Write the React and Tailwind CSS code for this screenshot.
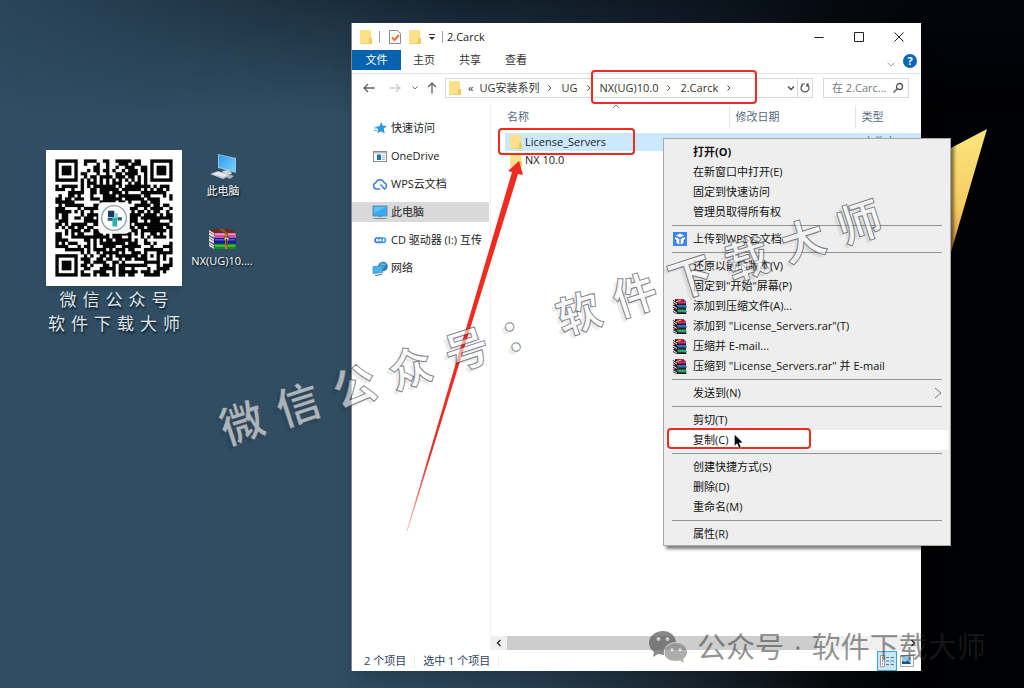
import React from "react";

const FolderIcon = ({ className = "w-3.5 h-4" }) => (
  <svg viewBox="0 0 14 16" className={className} aria-hidden="true">
    <path d="M1 1h10l1 1v7h1v6H1z" fill="#fbdc7f" />
    <path d="M1 1h10v13H1z" fill="#fde08a" />
    <path d="M10 9h3v6H2l8-1z" fill="#f1c95c" />
  </svg>
);

const BooksIcon = ({ className = "w-4 h-4" }) => (
  <svg viewBox="0 0 16 16" className={className} aria-hidden="true">
    <path d="M3 1h8l3 3v11l1 1H5l-3-3z" fill="#2a1a1c" />
    <path d="M3 1h8l3 2.500H6z" fill="#b3184f" />
    <path d="M6 3.500h8v2H6z" fill="#dc2a74" />
    <path d="M5 7h9l1 2.500H6z" fill="#2f74c8" />
    <path d="M5 11.500h9l1 2.700H6z" fill="#25ab70" />
    <path d="M1 2.500l4 3M1 4.500l4 2.500M1 7l4 2.500M1 9l4 2.500M1 11.500l4 2.500M1 13.500l4 2" stroke="#3a2a30" strokeWidth="1.200" />
    <path d="M1 3.500l4 2.500M1 8l4 2.500M1 12.500l4 2.500" stroke="#f4f0f0" strokeWidth=".9" />
    <path d="M4 4l5-2" stroke="#f0c040" strokeWidth="1.200" />
  </svg>
);

const ArchiveIcon = () => (
  <svg viewBox="0 0 28 22" className="w-7 h-[22px]" aria-hidden="true">
    <path d="M1 2l4-1h19l4 5H6z" fill="#6d2b1f" />
    <path d="M6 5h22v5H6z" fill="#c9549f" />
    <path d="M7 5.500h20v1.500H7z" fill="#ee9dd0" />
    <path d="M6 10h22v5.500H6z" fill="#181d8f" />
    <path d="M7 11h20v1.500H7z" fill="#4b62e8" />
    <path d="M6 16h22v5H6z" fill="#128c1c" />
    <path d="M7 17h20v1.500H7z" fill="#45d044" />
    <path d="M1 2l5 3v4.500L1 7zM1 8l5 3v4.500L1 13zM1 14l5 3v4l-5-3z" fill="#e4dede" />
    <path d="M1 4l5 3M1 10l5 3M1 16l5 3" stroke="#776a70" strokeWidth=".8" />
    <path d="M11 1h4l5 4v16h-3V6z" fill="#8c5424" />
    <path d="M18 6v15" stroke="#e3a84a" />
    <rect x="16" y="9" width="5" height="4" rx="1" fill="#d8c7a0" stroke="#54402a" />
    <path d="M18.500 11v6" stroke="#4a3a30" strokeWidth="1.500" />
  </svg>
);

const DesktopPcIcon = () => (
  <svg viewBox="0 0 28 26" className="w-7 h-[26px]" aria-hidden="true">
    <defs>
      <linearGradient id="pc" x1="0" y1="0" x2="1" y2="1">
        <stop offset="0" stopColor="#2a9cf0" />
        <stop offset="1" stopColor="#7ccdfb" />
      </linearGradient>
    </defs>
    <path d="M9 0l18 4v15L9 14z" fill="#8fc4e2" />
    <path d="M10 1l16 4v12l-16-4z" fill="url(#pc)" />
    <path d="M13 17l6-1 3 2 1 2-7 1z" fill="#cfd6da" />
    <path d="M1 20l8-3 13 4-8 4z" fill="#c3cace" />
    <path d="M4 20l5-2 10 3-5 2z" fill="#e6eaec" />
    <path d="M17 23l5-2 3 1-4 3z" fill="#a9b4bb" />
  </svg>
);

const navIcons = {
  star: (
    <svg viewBox="0 0 16 16" className="w-4 h-4">
      <path d="M9.500 2l1.200 3.800L15 6l-3.300 2.800 1 4.700-3.800-2.300-3.700 2 1-4L3 6.800l4.500-.6z" fill="#2795e0" />
      <path d="M2 8h4M2 10.500h3" stroke="#58b4ee" />
    </svg>
  ),
  drive: (
    <svg viewBox="0 0 16 16" className="w-4 h-4">
      <rect x="1.500" y="3.500" width="13" height="10" fill="#fff" stroke="#878d92" />
      <path d="M2 4h12v1.500H2z" fill="#b8bec4" />
      <path d="M5 6.500h4V12H5z" fill="#1177c4" />
      <path d="M10 7.500h3M10 9.500h3M10 11.500h3" stroke="#9aa" strokeWidth=".8" />
    </svg>
  ),
  cloud: (
    <svg viewBox="0 0 16 16" className="w-4 h-4" fill="none" stroke="#447fdc" strokeWidth="1.500">
      <path d="M8 13H4.500a3.200 3.200 0 0 1-.7-6.200A4.300 4.300 0 0 1 12 6.500 3.500 3.500 0 0 1 12.500 13L8.500 8.500" />
    </svg>
  ),
  pc: (
    <svg viewBox="0 0 16 16" className="w-4 h-4">
      <rect x="1" y="2" width="14" height="10" fill="#3ba9f0" stroke="#4d87ac" strokeWidth=".8" />
      <path d="M2 3h12L2 9z" fill="#62c0f6" />
      <path d="M6 12.500h4M1.500 14.500h13" stroke="#7390a3" />
    </svg>
  ),
  disc: (
    <svg viewBox="0 0 16 16" className="w-4 h-4" fill="none" strokeWidth="1.600">
      <rect x="3" y="6" width="7" height="4.500" rx="2.200" stroke="#5560e0" />
      <rect x="6.500" y="6" width="7" height="4.500" rx="2.200" stroke="#2fa0f2" />
      <path d="M6 8.200h4" stroke="#fff" strokeWidth="1" />
    </svg>
  ),
  network: (
    <svg viewBox="0 0 16 16" className="w-4 h-4">
      <circle cx="11" cy="6.500" r="4.800" fill="#2d82b4" />
      <path d="M9 3c3 0 4 3 2 5M8 5l6-1" stroke="#7dbfdf" fill="none" />
      <path d="M1 6.500l9.500-.8v7L1 13.500z" fill="#40b4f4" stroke="#5d8ba8" strokeWidth=".7" />
      <path d="M3 15.500l7-1" stroke="#4e7d9c" strokeWidth="1.200" />
    </svg>
  ),
};

const navItems = [
  ["star", "快速访问"],
  ["drive", "OneDrive"],
  ["cloud", "WPS云文档"],
  ["pc", "此电脑"],
  ["disc", "CD 驱动器 (I:) 互传"],
  ["network", "网络"],
];

const WpsIcon = () => (
  <svg viewBox="0 0 16 16" className="w-4 h-4" aria-hidden="true">
    <rect x="1" y="1" width="14" height="14" fill="#3f83ef" />
    <path d="M8 2.500l4 2-4 2-4-2zM3 6l4.300 2v5.500L4.500 12V9L3 8zM13 6L8.700 8v5.500L11.500 12V9L13 8z" fill="#fff" />
  </svg>
);

const menuGroups = [
  [["打开(O)"], ["在新窗口中打开(E)"], ["固定到快速访问"], ["管理员取得所有权"]],
  [["上传到WPS云文档", "wps"]],
  [
    ["还原以前的版本(V)"],
    ['固定到"开始"屏幕(P)'],
    ["添加到压缩文件(A)...", "books"],
    ['添加到 "License_Servers.rar"(T)', "books"],
    ["压缩并 E-mail...", "books"],
    ['压缩到 "License_Servers.rar" 并 E-mail', "books"],
  ],
  [["发送到(N)", "", "sub"]],
  [["剪切(T)"], ["复制(C)", "", "hover"]],
  [["创建快捷方式(S)"], ["删除(D)"], ["重命名(M)"]],
  [["属性(R)"]],
];

const N = 37;
const inFinder = (x, y) => {
  const spots = [[0, 0], [N - 7, 0], [0, N - 7]];
  for (const [a, b] of spots) {
    const dx = x - a;
    const dy = y - b;
    if (dx >= -1 && dx <= 7 && dy >= -1 && dy <= 7) {
      const r = Math.max(Math.abs(dx - 3), Math.abs(dy - 3));
      return r === 3 || r <= 1 ? 1 : 0;
    }
  }
  const r = Math.max(Math.abs(x - 30), Math.abs(y - 30));
  if (r <= 2) return r === 1 ? 0 : 1;
  return -1;
};
const buildCode = () => {
  let d = "";
  let seed = 90217;
  for (let y = 0; y < N; y++) {
    for (let x = 0; x < N; x++) {
      seed = (seed * 1103515245 + 12345) % 2147483648;
      const f = inFinder(x, y);
      const dark = Math.hypot(x - 18, y - 18) < 14 ? 0.66 : 0.54;
      const on = f >= 0 ? f === 1 : x === 6 || y === 6 ? (x + y) % 2 === 0 : (seed >> 8) % 1000 < dark * 1000;
      if (on) d += `M${x} ${y}h1v1h-1z`;
    }
  }
  return d;
};
const codePath = buildCode();

const QrCode = () => (
  <svg viewBox="-3 -3 43 43" className="w-[136px] h-[136px] bg-white shadow-md" role="img" aria-label="二维码">
    <path d={codePath} fill="#080808" stroke="#080808" strokeWidth=".06" />
    <rect x="13.500" y="13.500" width="10" height="10" rx="1.500" fill="#f8f8f8" />
    <circle cx="18.500" cy="18.500" r="3.900" fill="#fff" stroke="#8da0a8" strokeWidth=".4" />
    <path d="M16.600 16.200h2v2h-2z" fill="#193a68" />
    <path d="M18.600 17h1.200v1.200h-1.200z" fill="#8bd6d2" />
    <path d="M16.500 18.400h1.800v1h-1.800zM19.600 18.300h1.400v1h-1.400z" fill="#27597c" />
    <path d="M18 18.300h1.500v2.900H18z" fill="#28b3ad" />
  </svg>
);

const Crumb = ({ children }) => (
  <>
    <a href="#" className="whitespace-nowrap">{children}</a>
    <svg viewBox="0 0 4 6" className="w-1 h-1.5 shrink-0" fill="none" stroke="#555">
      <path d="M.5 .5L3 3 .5 5.500" />
    </svg>
  </>
);

function Explorer() {
  return (
    <section className="absolute left-[351px] right-[103px] top-[23px] bottom-[17px] flex flex-col bg-white border-l border-[#7b8791] shadow-xl overflow-hidden">
      <header className="flex items-center h-[27px] shrink-0 pl-[7px] pr-4">
        <FolderIcon />
        <span className="w-px h-3 bg-gray-400 ml-1.5 mr-2" />
        <svg viewBox="0 0 14 16" className="w-3.5 h-4" fill="none">
          <path d="M1.500 1.500h8l3 3v10h-11z" fill="#f8f8f8" stroke="#8b8b8b" />
          <path d="M4 8.500L6.500 11 11 6" stroke="#e2723f" strokeWidth="2" />
        </svg>
        <FolderIcon className="w-3.5 h-4 ml-1.5" />
        <svg viewBox="0 0 8 8" className="w-2 h-2 ml-1.5 mr-1.5">
          <path d="M1 1.500h6" stroke="#333" />
          <path d="M1 4h6L4 7z" fill="#333" />
        </svg>
        <span className="w-px h-3 bg-gray-400 mr-1" />
        <h1 className="text-[11px] text-[#222] flex-1">2.Carck</h1>
        <div className="flex items-center gap-7">
          <button aria-label="最小化" className="w-3 h-3">
            <svg viewBox="0 0 12 12" stroke="#222"><path d="M1.500 6.500h9" /></svg>
          </button>
          <button aria-label="最大化" className="w-3 h-3">
            <svg viewBox="0 0 12 12" stroke="#222" fill="none"><path d="M1.500 1.500h9v9h-9z" /></svg>
          </button>
          <button aria-label="关闭" className="w-3 h-3">
            <svg viewBox="0 0 12 12" stroke="#222"><path d="M1.500 1.500l9 9M10.500 1.500l-9 9" /></svg>
          </button>
        </div>
      </header>

      <nav className="flex items-start h-6 shrink-0 border-b border-[#e3e3e3] text-[#333]">
        <button className="w-[49px] h-5 bg-[#0563b1] text-white">文件</button>
        <button className="w-[46px] h-5">主页</button>
        <button className="w-[46px] h-5">共享</button>
        <button className="w-[46px] h-5">查看</button>
        <div className="flex-1" />
        <button aria-label="折叠功能区" className="h-5 w-3 mr-1.5 flex items-end">
          <svg viewBox="0 0 12 12" fill="none" stroke="#aaa"><path d="M2.500 4.500L6 8l3.500-3.500" /></svg>
        </button>
        <button aria-label="帮助" className="mt-1 mr-1 w-3.5 h-3.5 rounded-full bg-[#0a66b8] text-white text-[11px] leading-[14px] font-bold">?</button>
      </nav>

      <div className="flex items-center h-7 shrink-0 pl-2.5 pr-3 gap-2.5">
        <div className="flex items-center gap-2 shrink-0 w-[77px]">
          <button aria-label="后退"><svg viewBox="0 0 14 12" className="w-3.5 h-3" fill="none" stroke="#666" strokeWidth="1.400"><path d="M12.500 6H2M6 2L2 6l4 4" /></svg></button>
          <button aria-label="前进" className="ml-1"><svg viewBox="0 0 14 12" className="w-3.5 h-3" fill="none" stroke="#cfcfcf" strokeWidth="1.400"><path d="M1.500 6H12M8 2l4 4-4 4" /></svg></button>
          <button aria-label="最近位置" className="ml-0.5"><svg viewBox="0 0 6 6" className="w-1.5 h-1.5" fill="none" stroke="#777"><path d="M.5 1.500L3 4l2.500-2.500" /></svg></button>
          <button aria-label="上移"><svg viewBox="0 0 12 14" className="w-3 h-3.5" fill="none" stroke="#666" strokeWidth="1.400"><path d="M6 12.500V2M2 6l4-4 4 4" /></svg></button>
        </div>
        <div className="flex flex-1 min-w-0 items-center h-5 border border-[#d9d9d9] -ml-1 pl-0.5 text-[#333]">
          <FolderIcon />
          <span className="mx-1.5">«</span>
          <div className="flex items-center gap-[9px] flex-1 min-w-0 overflow-hidden">
            <Crumb>UG安装系列</Crumb>
            <Crumb>UG</Crumb>
            <Crumb>NX(UG)10.0</Crumb>
            <Crumb>2.Carck</Crumb>
          </div>
          <button aria-label="展开地址" className="px-0.5"><svg viewBox="0 0 8 8" className="w-2 h-2" fill="none" stroke="#444" strokeWidth="1.300"><path d="M1 2.500l3 3 3-3" /></svg></button>
          <span className="w-px h-full bg-[#d9d9d9]" />
          <button aria-label="刷新" className="px-px"><svg viewBox="0 0 12 12" className="w-3 h-3" fill="none" stroke="#555" strokeWidth="1.200"><path d="M8 2.500a4 4 0 1 1-4.500.3M3 5V2h3M8 5V2h2" /></svg></button>
        </div>
        <label className="flex items-center w-[86px] h-5 shrink-0 border border-[#d9d9d9] pl-2 pr-1">
          <input aria-label="搜索" placeholder="在 2.Carc..." className="w-full min-w-0 bg-transparent outline-none placeholder:text-[#777]" />
          <svg viewBox="0 0 12 12" className="w-3 h-3 shrink-0" fill="none" stroke="#555" strokeWidth="1.300"><circle cx="7.500" cy="4.500" r="3" /><path d="M5.300 6.700L1.500 10.500" /></svg>
        </label>
      </div>

      <div className="flex flex-1 min-h-0">
        <aside className="w-[139px] shrink-0 border-r border-[#f2f2f2] pt-4 pr-px">
          <ul className="flex flex-col gap-2">
            {navItems.map(([icon, label]) => (
              <li key={label}>
                <a href="#" className={label === "此电脑" ? "flex items-center h-5 pl-5 gap-[3px] whitespace-nowrap bg-[#d9d9d9]" : "flex items-center h-5 pl-5 gap-[3px] whitespace-nowrap"}>
                  {navIcons[icon]}
                  {label}
                </a>
              </li>
            ))}
          </ul>
        </aside>
        <main className="flex flex-col flex-1 min-w-0 pt-[3px]">
          <div className="flex-1 min-h-0 overflow-hidden pl-3.5">
            <table className="w-full table-fixed border-collapse text-left">
              <thead>
                <tr className="h-[23px] text-[#55697f]">
                  <th className="w-[224px] font-normal pl-0.5 border-r border-[#e5e5e5]">
                    <div className="relative">
                      名称
                      <svg viewBox="0 0 8 5" className="absolute w-2 h-[5px] left-[105px] -top-1.5" fill="none" stroke="#888"><path d="M1 4l3-3 3 3" /></svg>
                    </div>
                  </th>
                  <th className="w-[126px] font-normal pl-1.5 border-r border-[#e5e5e5]">修改日期</th>
                  <th className="font-normal pl-1.5">类型</th>
                </tr>
              </thead>
              <tbody>
                <tr className="h-[5px]"><td colSpan="3" /></tr>
                <tr className="h-[18px] bg-[#cce8ff]">
                  <td><div className="flex items-center pl-1 gap-0.5 h-[18px]"><FolderIcon />License_Servers</div></td>
                  <td />
                  <td className="pl-2 text-gray-500">文件夹</td>
                </tr>
                <tr className="h-[18px]">
                  <td><div className="flex items-center pl-1 gap-0.5 h-[18px]"><FolderIcon />NX 10.0</div></td>
                  <td />
                  <td className="pl-2 text-gray-500">文件夹</td>
                </tr>
              </tbody>
            </table>
          </div>
          <div className="flex items-center h-3.5 shrink-0 bg-[#f0f0f0]">
            <button aria-label="向左滚动" className="w-4 flex justify-center"><svg viewBox="0 0 6 8" className="w-1.5 h-2" fill="none" stroke="#333" strokeWidth="1.500"><path d="M4.500 1l-3 3 3 3" /></svg></button>
            <div className="h-full w-[72%] bg-[#cdcdcd]" />
            <div className="flex-1" />
            <button aria-label="向右滚动" className="w-4 flex justify-center"><svg viewBox="0 0 6 8" className="w-1.5 h-2" fill="none" stroke="#333" strokeWidth="1.500"><path d="M1.500 1l3 3-3 3" /></svg></button>
          </div>
        </main>
      </div>

      <footer className="flex items-center h-[21px] shrink-0 pl-3 pr-1 text-[#2c4461]">
        <span>2 个项目</span>
        <span className="w-px h-3 bg-[#eee] mx-2" />
        <span>选中 1 个项目</span>
        <span className="w-px h-3 bg-[#eee] mx-2" />
        <div className="flex-1" />
        <button aria-label="详细信息" className="w-5 h-5 border border-[#35a9cf] bg-[#c6e8f5] flex items-center justify-center">
          <svg viewBox="0 0 14 12" className="w-3.5 h-3" fill="none"><path d="M.5 .5h4v11h-4z" fill="#fff" stroke="#999" /><path d="M2.500 2v2M2.500 5v2M2.500 8v2" stroke="#b08c8c" /><path d="M6 2.500h3M10.500 2.500H14M6 6h3M10.500 6H14M6 9.500h3M10.500 9.500H14" stroke="#56799a" /></svg>
        </button>
        <button aria-label="大图标" className="w-5 h-5 flex items-center justify-center">
          <svg viewBox="0 0 14 12" className="w-3.5 h-3"><path d="M.5 .5h13v11H.5z" fill="#f6f6f6" stroke="#a0a6ac" /><path d="M2 2h9v7H2z" fill="#8cc4ee" /><path d="M2 9V6l3 1 3-1.500L11 9z" fill="#1d4f83" /></svg>
        </button>
      </footer>
    </section>
  );
}

function ContextMenu() {
  return (
    <ul role="menu" className="absolute left-[663px] top-[138px] w-[288px] bg-[#eeeeee] border border-[#a8a8a8] pt-[3px] pb-px px-0.5 shadow-[3px_3px_3px_rgba(0,0,0,0.5)] text-[#111]">
      {menuGroups.map((group, g) => (
        <React.Fragment key={g}>
          {g > 0 && (
            <li role="separator" className="flex items-center h-[7px] px-1.5">
              <span className="h-px w-full bg-[#929292]" />
            </li>
          )}
          {group.map(([label, icon, state]) => (
            <li key={label} role="none">
              <button role="menuitem" className={state === "hover" ? "flex items-center w-full h-5 pl-1.5 pr-1.5 gap-[5px] bg-white" : "flex items-center w-full h-5 pl-1.5 pr-1.5 gap-[5px]"}>
                <span className="w-4 h-4 shrink-0">
                  {icon === "wps" && <WpsIcon />}
                  {icon === "books" && <BooksIcon />}
                </span>
                <span className={label === "打开(O)" ? "flex-1 text-left font-bold" : "flex-1 text-left whitespace-nowrap"}>{label}</span>
                {state === "sub" && (
                  <svg viewBox="0 0 8 14" className="w-2 h-3.5" fill="none" stroke="#777"><path d="M1 2l6 5-6 5" /></svg>
                )}
              </button>
            </li>
          ))}
        </React.Fragment>
      ))}
    </ul>
  );
}

export default function App() {
  return (
    <div className="relative h-screen w-full overflow-hidden text-[11px] leading-[14px] text-[#222] font-['Open_Sans','Noto_Sans_CJK_SC',sans-serif] bg-[#000103]">
      <div className="absolute inset-0 bg-[linear-gradient(90deg,#304d63_0%,#304d62_34%,#283f52_52%,#1a2630_68%,#07090c_82%,#000103_90%)]" />
      <div className="absolute inset-x-0 top-0 h-28 bg-[linear-gradient(180deg,rgba(4,10,18,0.6),rgba(4,10,18,0))] [mask-image:linear-gradient(90deg,rgba(0,0,0,0.2),black_45%)]" />

      <svg viewBox="0 0 60 130" className="absolute left-[928px] top-[128px] w-[60px] h-[130px]" aria-hidden="true">
        <defs>
          <linearGradient id="gold" x1="0" y1="0" x2="0" y2="1">
            <stop offset="0" stopColor="#fbe67c" />
            <stop offset=".6" stopColor="#f6cb63" />
            <stop offset="1" stopColor="#d98d35" />
          </linearGradient>
        </defs>
        <path d="M59 1L0 32v98l23-6z" fill="url(#gold)" />
      </svg>

      <figure className="absolute left-[46px] top-[150px] flex flex-col items-center text-[17px] leading-6 text-[#dfe5e9]">
        <QrCode />
        <figcaption className="flex flex-col items-center pt-0.5 [text-shadow:1px_2px_2px_#0c1822]">
          <div className="flex gap-1.5">{[..."微信公众号"].map((c) => <span key={c}>{c}</span>)}</div>
          <div className="flex gap-1.5">{[..."软件下载大师"].map((c) => <span key={c}>{c}</span>)}</div>
        </figcaption>
      </figure>

      <a href="#" className="absolute left-[186px] top-[154px] w-[74px] flex flex-col items-center gap-1 text-white [text-shadow:1px_1px_2px_#000]">
        <DesktopPcIcon />
        此电脑
      </a>
      <a href="#" className="absolute left-[186px] top-[228px] w-[72px] flex flex-col items-center gap-1 text-white [text-shadow:1px_1px_2px_#000]">
        <ArchiveIcon />
        NX(UG)10....
      </a>

      <Explorer />
      <ContextMenu />

      <div className="absolute left-[591px] top-[70px] w-[166px] h-[34px] rounded-sm border-2 border-[#f12a20] pointer-events-none" />
      <div className="absolute left-[498px] top-[128px] w-[137px] h-[27px] rounded-sm border-2 border-[#f12a20] pointer-events-none" />
      <div className="absolute left-[667px] top-[428px] w-[144px] h-[21px] rounded-sm border-2 border-[#f12a20] pointer-events-none" />

      <svg viewBox="0 0 120 372" className="absolute left-[405px] top-[161px] w-[120px] h-[372px] pointer-events-none" aria-hidden="true">
        <defs>
          <linearGradient id="tail" x1="0" y1="1" x2="0" y2="0">
            <stop offset="0" stopColor="#f12a20" stopOpacity=".3" />
            <stop offset=".2" stopColor="#e0332b" />
            <stop offset=".4" stopColor="#f12a20" />
          </linearGradient>
        </defs>
        <path d="M1.500 370L107 11l-4-1L114 0l4 14-5-1L2.500 370z" fill="url(#tail)" />
      </svg>

      <svg viewBox="0 0 10 15" className="absolute left-[734px] top-[434px] w-[10px] h-[15px] pointer-events-none" aria-hidden="true">
        <path d="M.5 .5v11.500l2.600-2.400 2 4.700 2-.9-2-4.500 3.700-.3z" fill="#000" stroke="#fff" strokeWidth=".4" />
      </svg>

      <div className="absolute left-[204px] top-[292px] flex gap-[15px] -rotate-[18deg] text-[44px] leading-[60px] font-bold text-white/60 pointer-events-none [-webkit-text-stroke:1px_rgba(45,50,60,0.6)] [text-shadow:-4px_2px_1px_rgba(0,0,0,0.08)]">
        {[..."微信公众号：软件下载大师"].map((c) => <span key={c}>{c}</span>)}
      </div>

      <div className="absolute left-[649px] top-[629px] flex items-center gap-2.5 text-[29px] leading-9 text-[#2a2a2a]/50 whitespace-nowrap pointer-events-none">
        <svg viewBox="0 0 38 32" className="w-[38px] h-8" aria-hidden="true">
          <path fillRule="evenodd" d="M14 0C6 0 0 5 0 12c0 4 2 7 5 9l-1 5 5-3 6 1C14 16 19 11 27 11 26 4 21 0 14 0zM9.500 6a2 2 0 1 1 0 4 2 2 0 0 1 0-4zm9 0a2 2 0 1 1 0 4 2 2 0 0 1 0-4z" fill="#555" fillOpacity=".7" />
          <path fillRule="evenodd" d="M27 12c-7 0-11.500 4-11.500 9.500S20 30 27 30l4-.6 4 2.300-1-3.700c2.600-1.700 4-4 4-6.500C38 16 33.500 12 27 12zM23 17a1.600 1.600 0 1 1 0 3.200 1.600 1.600 0 0 1 0-3.200zm8 0a1.600 1.600 0 1 1 0 3.200 1.600 1.600 0 0 1 0-3.200z" fill="#777" fillOpacity=".6" />
        </svg>
        <span>公众号</span>
        <span>·</span>
        <span>软件下载大师</span>
      </div>
    </div>
  );
}
